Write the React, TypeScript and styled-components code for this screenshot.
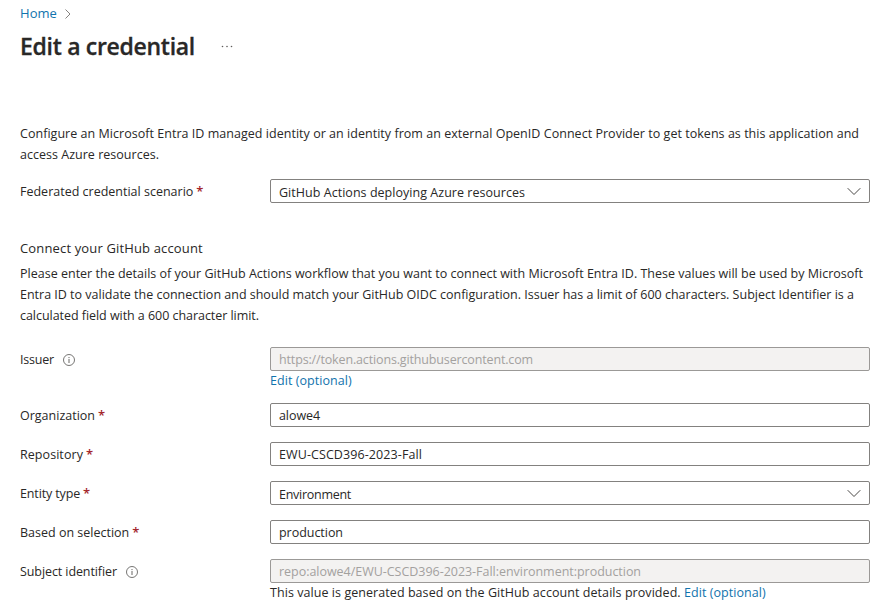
import type { ReactNode } from "react";
import styled, { createGlobalStyle } from "styled-components";

const GlobalStyle = createGlobalStyle`
  * { box-sizing: border-box; }
  body {
    margin: 0;
    background: #fff;
    color: #292827;
    font: 400 12.5px/21px "Open Sans", "Noto Sans", sans-serif;
    overflow: hidden;
  }
`;

const Page = styled.main`
  display: flex;
  flex-direction: column;
  width: 887px;
  height: 603px;
  padding: 3px 17px 0 20px;
  overflow: hidden;
`;

const Breadcrumb = styled.nav`
  display: flex;
  align-items: center;
  gap: 7px;
  height: 20px;
  font-size: 13px;
`;

const Link = styled.a`
  color: #1173ad;
  text-decoration: none;
  letter-spacing: 0.06px;
`;

const Header = styled.header`
  display: flex;
  align-items: center;
  height: 46px;
  gap: 26px;
`;

const Title = styled.h1`
  margin: 0;
  width: 175px;
  font-size: 23px;
  font-weight: 600;
  line-height: 32px;
  letter-spacing: -0.3px;
  -webkit-text-stroke: 0.3px currentColor;
  white-space: nowrap;
`;

const Paragraph = styled.p<{ $tracking?: number }>`
  margin: 0;
  letter-spacing: ${(p) => p.$tracking ?? 0}px;
  white-space: nowrap;
`;

const Intro = styled.section`
  margin-top: 54px;
`;

const SectionTitle = styled.h2`
  margin: 35px 0 5px;
  font-size: 13px;
  font-weight: 400;
  line-height: 20px;
  letter-spacing: 0.15px;
`;

const Row = styled.div<{ $top: number }>`
  display: grid;
  grid-template-columns: 250px 600px;
  align-items: start;
  margin-top: ${(p) => p.$top}px;
`;

const Label = styled.label`
  display: flex;
  align-items: center;
  height: 24px;
  white-space: nowrap;
`;

const LabelText = styled.span<{ $tracking?: number }>`
  letter-spacing: ${(p) => p.$tracking ?? 0}px;
`;

const Required = styled.span`
  margin-left: 3px;
  color: #a4262c;
  font-size: 13px;
  font-weight: 600;
`;

const Field = styled.div<{ $disabled?: boolean; $select?: boolean; $tracking?: number }>`
  display: flex;
  align-items: center;
  justify-content: space-between;
  height: 24px;
  padding: ${(p) => (p.$select ? "2px 8px 0 8px" : "0 8px")};
  border: 1px solid ${(p) => (p.$disabled ? "#9b9997" : "#83817f")};
  border-radius: 2px;
  background: ${(p) => (p.$disabled ? "#f3f2f1" : "#fff")};
  color: ${(p) => (p.$disabled ? "#a3a19f" : "#292827")};
  letter-spacing: ${(p) => p.$tracking ?? 0}px;
  white-space: nowrap;
`;

const Hint = styled.div`
  height: 20px;
  line-height: 20px;
  letter-spacing: 0.06px;
  white-space: nowrap;
`;

const Svg = styled.svg<{ $gap?: number; $lift?: number; $drop?: number }>`
  display: block;
  flex: none;
  margin-left: ${(p) => p.$gap ?? 0}px;
  margin-top: ${(p) => p.$drop ?? 0}px;
  margin-bottom: ${(p) => p.$lift ?? 0}px;
`;

const Crumb = () => (
  <Svg $drop={1} width="8" height="12" viewBox="0 0 8 12" fill="none" stroke="#85827f">
    <path d="M1.5 1.5 6 6 1.5 10.5" />
  </Svg>
);

const Chevron = () => (
  <Svg $lift={2} width="14" height="9" viewBox="0 0 14 9" fill="none" stroke="#4a4846">
    <path d="M.7 1.2 7 7.5 13.3 1.2" />
  </Svg>
);

const Info = () => (
  <Svg $gap={9} $drop={2} width="12" height="12" viewBox="0 0 12 12" fill="none" stroke="#686664">
    <circle cx="6" cy="6" r="5.5" strokeWidth=".9" />
    <path d="M6 5v4M6 3v1.1" />
  </Svg>
);

const More = () => (
  <Svg $drop={2} width="12" height="4" viewBox="0 0 12 4" fill="#605e5c">
    <circle cx="1.5" cy="1.5" r=".8" />
    <circle cx="6" cy="1.5" r=".8" />
    <circle cx="10.5" cy="1.5" r=".8" />
  </Svg>
);

type FormRowProps = {
  label: string;
  value: string;
  top?: number;
  required?: boolean;
  disabled?: boolean;
  select?: boolean;
  labelTracking?: number;
  tracking?: number;
  children?: ReactNode;
};

function FormRow({ label, value, top = 15, required, disabled, select, labelTracking, tracking, children }: FormRowProps) {
  return (
    <Row $top={top}>
      <Label>
        <LabelText $tracking={labelTracking}>{label}</LabelText>
        {required ? <Required>*</Required> : <Info />}
      </Label>
      <div>
        <Field $disabled={disabled} $select={select} $tracking={tracking}>
          <span>{value}</span>
          {select && <Chevron />}
        </Field>
        {children}
      </div>
    </Row>
  );
}

export default function App() {
  return (
    <>
      <GlobalStyle />
      <Page>
        <Breadcrumb>
          <Link>Home</Link>
          <Crumb />
        </Breadcrumb>
        <Header>
          <Title>Edit a credential</Title>
          <More />
        </Header>
        <Intro>
          <Paragraph $tracking={0.032}>
            Configure an Microsoft Entra ID managed identity or an identity from an external OpenID Connect Provider to get tokens as this application and
          </Paragraph>
          <Paragraph $tracking={0.02}>access Azure resources.</Paragraph>
        </Intro>
        <FormRow label="Federated credential scenario" value="GitHub Actions deploying Azure resources" top={14} required select tracking={0.034} />
        <SectionTitle>Connect your GitHub account</SectionTitle>
        <Paragraph $tracking={0.009}>
          Please enter the details of your GitHub Actions workflow that you want to connect with Microsoft Entra ID. These values will be used by Microsoft
        </Paragraph>
        <Paragraph $tracking={-0.006}>
          Entra ID to validate the connection and should match your GitHub OIDC configuration. Issuer has a limit of 600 characters. Subject Identifier is a
        </Paragraph>
        <Paragraph $tracking={-0.045}>calculated field with a 600 character limit.</Paragraph>
        <FormRow label="Issuer" value="https://token.actions.githubusercontent.com" top={21} disabled labelTracking={-0.2} tracking={-0.149}>
          <Hint>
            <Link>Edit (optional)</Link>
          </Hint>
        </FormRow>
        <FormRow label="Organization" value="alowe4" top={12} required tracking={-0.08} />
        <FormRow label="Repository" value="EWU-CSCD396-2023-Fall" required labelTracking={0.06} tracking={0.092} />
        <FormRow label="Entity type" value="Environment" required select labelTracking={-0.14} tracking={-0.27} />
        <FormRow label="Based on selection" value="production" required tracking={-0.037} />
        <FormRow label="Subject identifier" value="repo:alowe4/EWU-CSCD396-2023-Fall:environment:production" disabled labelTracking={-0.09} tracking={-0.031}>
          <Hint>
            This value is generated based on the GitHub account details provided. <Link>Edit (optional)</Link>
          </Hint>
        </FormRow>
      </Page>
    </>
  );
}
